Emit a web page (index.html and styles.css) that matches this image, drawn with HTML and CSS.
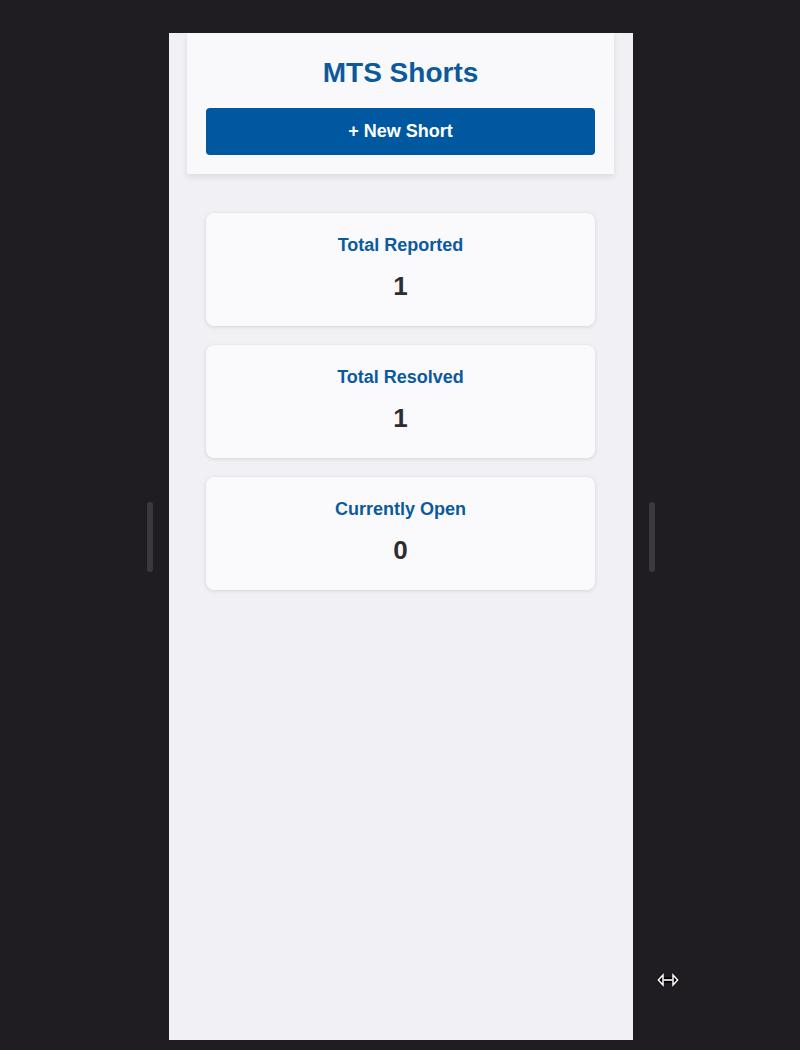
FILE: index.html
```html
<!DOCTYPE html>
<html lang="en">
<head>
<meta charset="utf-8">
<title>MTS Shorts</title>
<link rel="stylesheet" href="styles.css">
</head>
<body>
<div class="stage">
  <div class="handle"></div>
  <div class="frame">
    <header class="topbar">
      <h1 class="title">MTS Shorts</h1>
      <button class="new-btn">+ New Short</button>
    </header>
    <main class="stats">
      <section class="card">
        <h2 class="card-title">Total Reported</h2>
        <div class="card-num">1</div>
      </section>
      <section class="card">
        <h2 class="card-title">Total Resolved</h2>
        <div class="card-num">1</div>
      </section>
      <section class="card">
        <h2 class="card-title">Currently Open</h2>
        <div class="card-num">0</div>
      </section>
    </main>
  </div>
  <div class="handle"></div>
</div>
<svg class="cursor" width="26" height="22" viewBox="0 0 26 22">
  <path d="M1.5 11 L9 3 L9 19 Z M24.5 11 L17 3 L17 19 Z M9 8.5 H17 V13.5 H9 Z" fill="#000"/>
  <path d="M3.3 11 L8 6 V16 Z M22.7 11 L18 6 V16 Z" fill="#000" stroke="#fff" stroke-width="1.5" stroke-linejoin="miter"/>
  <path d="M8.5 11 H17.5" stroke="#fff" stroke-width="1.6"/>
</svg>
</body>
</html>
```

FILE: styles.css
```css
html, body {
  margin: 0;
  padding: 0;
  background: #1f1d21;
  height: 100%;
  overflow: hidden;
}

body {
  font-family: "Liberation Sans", Arial, sans-serif;
}

.stage {
  display: flex;
  align-items: center;
  gap: 16px;
  padding: 33px 0 0 147px;
}

.handle {
  width: 6px;
  height: 70px;
  border-radius: 3px;
  background: #3b393e;
}

.frame {
  width: 464px;
  height: 1007px;
  background: #f0f0f5;
  overflow: hidden;
  box-sizing: border-box;
}

.topbar {
  margin: 0 19px 0 18px;
  background: #f9f9fc;
  padding: 24px 19px 19px;
  box-shadow: 0 3px 6px rgba(0, 0, 0, 0.09);
  display: flex;
  flex-direction: column;
  gap: 19px;
}

.title {
  margin: 0;
  text-align: center;
  font-size: 28px;
  font-weight: 700;
  color: #0c5a9c;
  line-height: 32px;
}

.new-btn {
  border: none;
  border-radius: 4px;
  background: #0058a1;
  color: #fff;
  font-family: "Liberation Sans", Arial, sans-serif;
  font-size: 18px;
  font-weight: 700;
  height: 47px;
  padding: 0;
}

.stats {
  display: flex;
  flex-direction: column;
  gap: 19px;
  padding: 39px 38px 0 37px;
}

.card {
  background: #fafafc;
  border-radius: 8px;
  box-shadow: 0 1px 4px rgba(0, 0, 0, 0.12);
  height: 113px;
  box-sizing: border-box;
  padding: 22px 16px 0;
  text-align: center;
}

.card-title {
  margin: 0 0 15px;
  font-size: 18px;
  font-weight: 700;
  line-height: 21px;
  color: #0c5a9c;
}

.card-num {
  font-size: 26px;
  font-weight: 700;
  line-height: 30px;
  color: #2d2d2f;
}

.cursor {
  position: absolute;
  left: 655px;
  top: 969px;
}
```
